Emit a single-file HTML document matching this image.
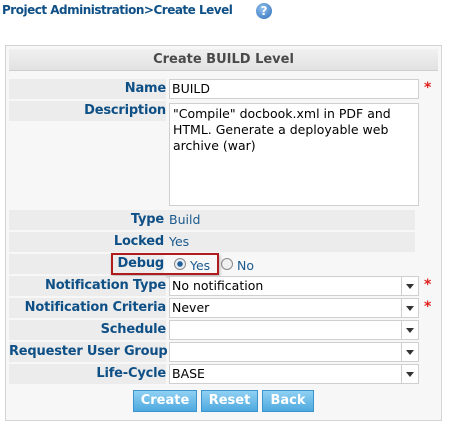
<!DOCTYPE html>
<html><head><style>
*{margin:0;padding:0;box-sizing:border-box}
body{width:449px;height:427px;background:#fff;font-family:"DejaVu Sans",Verdana,sans-serif;font-size:12px;position:relative;overflow:hidden}
.a{position:absolute}
.t{color:#0e4f86;font-weight:bold;font-size:12px;left:2px;top:3px;letter-spacing:-0.5px}
.box{left:5px;top:45px;width:437px;height:376px;border:1px solid #d4d4d4;background:#f7f7f7}
.hd{left:9px;top:49px;width:429px;height:22px;background:linear-gradient(#f0f0f0,#e2e2e2);border-bottom:1px solid #cfcfcf;color:#4a4a4a;font-weight:bold;text-align:center;line-height:22px;font-size:13px}
.lb{left:9px;width:157px;height:20px;background:#ececec;color:#0e4f86;font-weight:bold;text-align:right;line-height:20px;font-size:13px;white-space:nowrap;letter-spacing:-0.2px}
.in{left:169px;width:250px;height:20px;background:#fff;border:1px solid #cfcfcf;line-height:18px;padding-left:2px;font-size:12.5px;color:#000}
.sel:after{content:"";position:absolute;right:0;top:0;width:16px;height:18px;border-left:1px solid #cfcfcf;background:#fff}
.arr{position:absolute;right:4px;top:7px;width:0;height:0;border-left:4px solid transparent;border-right:4px solid transparent;border-top:5px solid #333;z-index:2}
.val{left:169px;width:246px;height:20px;background:#ececec;color:#1a5a8e;line-height:20px;font-size:12.5px;padding-left:0}
.st{color:#e0201b;font-weight:bold;left:424px;font-size:14px}
.b{top:390px;height:22px;background:linear-gradient(#8fd0f3,#4ea9df);border:1px solid #3a95cf;color:#fff;font-weight:bold;text-align:center;line-height:20px;font-size:13px}
.r{width:12px;height:12px;border-radius:50%;border:1px solid #8a8a8a;background:#f0f0f0}
</style></head><body>
<div class="a t">Project Administration&gt;Create Level</div>
<div class="a" style="left:256px;top:3px;width:16px;height:16px;border-radius:50%;background:radial-gradient(circle at 40% 35%,#8ec0ee,#2f6fb8);color:#fff;font-weight:bold;font-size:12px;text-align:center;line-height:16px">?</div>
<div class="a box"></div>
<div class="a hd">Create BUILD Level</div>

<div class="a lb" style="top:79px">Name</div>
<div class="a in" style="top:79px">BUILD</div>
<div class="a st" style="top:80px">*</div>

<div class="a lb" style="top:101px">Description</div>
<div class="a in" style="top:103px;height:103px;line-height:16px;padding:2px 3px;white-space:normal">"Compile" docbook.xml in PDF and HTML. Generate a deployable web archive (war)</div>

<div class="a lb" style="top:210px;width:155px">Type</div>
<div class="a val" style="top:210px;left:164px;padding-left:5px;width:251px">Build</div>
<div class="a lb" style="top:232px;width:155px">Locked</div>
<div class="a val" style="top:232px;left:164px;padding-left:5px;width:251px">Yes</div>
<div class="a lb" style="top:254px;width:155px">Debug</div>
<div class="a" style="left:174px;top:258px" ><div class="r" style="background:radial-gradient(circle,#1f5e99 0 2.5px,#e8eef4 3px)"></div></div>
<div class="a" style="left:190px;top:256px;color:#1a5a8e;font-size:12.5px;line-height:20px">Yes</div>
<div class="a" style="left:221px;top:258px"><div class="r"></div></div>
<div class="a" style="left:237px;top:256px;color:#1a5a8e;font-size:12.5px;line-height:20px">No</div>
<div class="a" style="left:111px;top:253px;width:108px;height:22px;border:2px solid #b01c1c;box-shadow:1px 2px 3px rgba(0,0,0,.25)"></div>

<div class="a lb" style="top:276px">Notification Type</div>
<div class="a in sel" style="top:276px">No notification<span class="arr"></span></div>
<div class="a st" style="top:277px">*</div>
<div class="a lb" style="top:298px">Notification Criteria</div>
<div class="a in sel" style="top:298px">Never<span class="arr"></span></div>
<div class="a st" style="top:299px">*</div>
<div class="a lb" style="top:320px">Schedule</div>
<div class="a in sel" style="top:320px"><span class="arr"></span></div>
<div class="a lb" style="top:342px">Requester User Group</div>
<div class="a in sel" style="top:342px"><span class="arr"></span></div>
<div class="a lb" style="top:364px">Life-Cycle</div>
<div class="a in sel" style="top:364px">BASE<span class="arr"></span></div>

<div class="a b" style="left:133px;width:64px">Create</div>
<div class="a b" style="left:201px;width:57px">Reset</div>
<div class="a b" style="left:262px;width:52px">Back</div>
</body></html>
